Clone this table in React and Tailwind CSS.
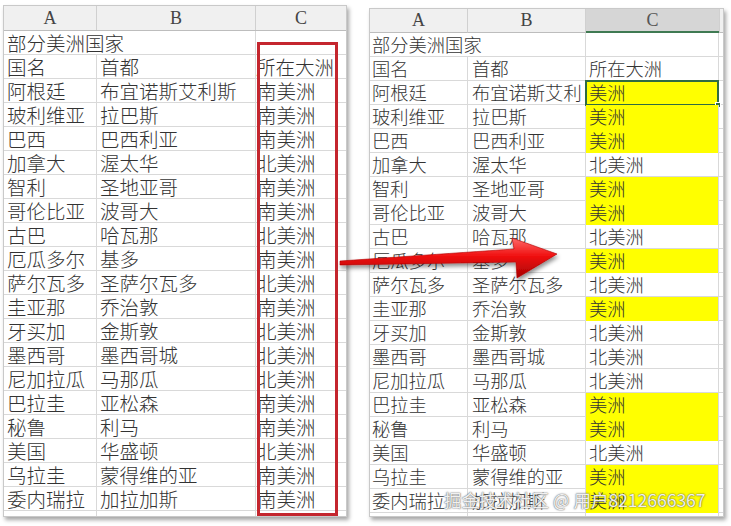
const rows = [
  ["阿根廷", "布宜诺斯艾利斯", "南"],
  ["玻利维亚", "拉巴斯", "南"],
  ["巴西", "巴西利亚", "南"],
  ["加拿大", "渥太华", "北"],
  ["智利", "圣地亚哥", "南"],
  ["哥伦比亚", "波哥大", "南"],
  ["古巴", "哈瓦那", "北"],
  ["厄瓜多尔", "基多", "南"],
  ["萨尔瓦多", "圣萨尔瓦多", "北"],
  ["圭亚那", "乔治敦", "南"],
  ["牙买加", "金斯敦", "北"],
  ["墨西哥", "墨西哥城", "北"],
  ["尼加拉瓜", "马那瓜", "北"],
  ["巴拉圭", "亚松森", "南"],
  ["秘鲁", "利马", "南"],
  ["美国", "华盛顿", "北"],
  ["乌拉圭", "蒙得维的亚", "南"],
  ["委内瑞拉", "加拉加斯", "南"],
];

const cjk = "font-['Noto_Sans_CJK_SC',sans-serif] font-light";

const LeftSheet = () => (
  <div className="mt-[5px] ml-[3px] w-[344px] h-[512px] bg-white border border-[#c9c9c9] shadow-[2px_3px_4px_rgba(0,0,0,0.35)] overflow-hidden">
    <div className="flex h-[25px] bg-[#f0f0f0] border-b border-[#bdbdbd] font-['Liberation_Serif',serif] text-[18px] text-[#444] leading-[25px]">
      <div className="w-[93px] text-center border-r border-[#d0d0d0]">A</div>
      <div className="w-[159px] text-center border-r border-[#d0d0d0]">B</div>
      <div className="flex-1 text-center">C</div>
    </div>
    <div className={`${cjk} text-[19.5px] text-[#333] leading-[23px]`}>
      <div className="flex h-[24px] border-b border-[#d9d9d9]">
        <div className="w-[252px] pl-[3px] border-r border-[#d9d9d9] whitespace-nowrap">部分美洲国家</div>
        <div className="flex-1" />
      </div>
      <div className="flex h-[24px] border-b border-[#d9d9d9]">
        <div className="w-[93px] pl-[3px] border-r border-[#d9d9d9]">国名</div>
        <div className="w-[159px] pl-[3px] border-r border-[#d9d9d9]">首都</div>
        <div className="flex-1 whitespace-nowrap overflow-hidden">所在大洲</div>
      </div>
      {rows.map(([a, b, c]) => (
        <div key={a} className="flex h-[24px] border-b border-[#d9d9d9]">
          <div className="w-[93px] pl-[3px] border-r border-[#d9d9d9] whitespace-nowrap overflow-hidden">{a}</div>
          <div className="w-[159px] pl-[3px] border-r border-[#d9d9d9] whitespace-nowrap overflow-hidden">{b}</div>
          <div className="flex-1 pl-[1px] whitespace-nowrap overflow-hidden">{c}美洲</div>
        </div>
      ))}
      <div className="flex h-[6px]">
        <div className="w-[93px] border-r border-[#d9d9d9]" />
        <div className="w-[159px] border-r border-[#d9d9d9]" />
      </div>
    </div>
  </div>
);

const RightSheet = () => (
  <div className="mt-[8px] ml-[22px] w-[355px] h-[509px] bg-white border border-[#c9c9c9] shadow-[2px_3px_4px_rgba(0,0,0,0.35)] overflow-hidden">
    <div className="flex h-[24px] font-['Liberation_Serif',serif] text-[18px] text-[#444] leading-[23px]">
      <div className="w-[98px] text-center bg-[#f0f0f0] border-r border-b border-[#d0d0d0] border-b-[#bdbdbd]">A</div>
      <div className="w-[118px] text-center bg-[#f0f0f0] border-r border-b border-[#d0d0d0] border-b-[#bdbdbd]">B</div>
      <div className="w-[133px] text-center bg-[#d6d6d6] border-b-2 border-[#3f7a52] text-[#555]">C</div>
      <div className="flex-1 bg-[#f0f0f0] border-l border-b border-[#d0d0d0] border-b-[#bdbdbd]" />
    </div>
    <div className={`${cjk} text-[18.3px] text-[#333] leading-[23px]`}>
      <div className="flex h-[24px] border-b border-[#d9d9d9]">
        <div className="w-[216px] pl-[2px] border-r border-[#d9d9d9] whitespace-nowrap">部分美洲国家</div>
        <div className="w-[133px] border-r border-[#d9d9d9]" />
      </div>
      <div className="flex h-[24px] border-b border-[#d9d9d9]">
        <div className="w-[98px] pl-[2px] border-r border-[#d9d9d9]">国名</div>
        <div className="w-[118px] pl-[4px] border-r border-[#d9d9d9]">首都</div>
        <div className="w-[133px] pl-[3px] border-r border-[#d9d9d9]">所在大洲</div>
      </div>
      {rows.map(([a, b, c], i) => {
        const south = c === "南";
        return (
          <div key={a} className="flex h-[24px] border-b border-[#d9d9d9]">
            <div className="w-[98px] pl-[2px] border-r border-[#d9d9d9] whitespace-nowrap overflow-hidden">{a}</div>
            <div className="w-[118px] pl-[4px] border-r border-[#d9d9d9] whitespace-nowrap overflow-hidden">
              {i === 0 ? "布宜诺斯艾利" : b}
            </div>
            <div
              className={`relative w-[133px] pl-[3px] whitespace-nowrap border-r border-[#d9d9d9] ${
                south ? "bg-[#ffff00] -mb-px h-[24px]" : ""
              }`}
            >
              {south ? "美洲" : "北美洲"}
              {i === 0 && (
                <>
                  <div className="absolute -top-px -left-px -right-px -bottom-px border-2 border-[#2f6b43]" />
                  <div className="absolute -right-[3px] -bottom-[3px] w-[6px] h-[6px] bg-[#2f6b43] border border-white" />
                </>
              )}
            </div>
          </div>
        );
      })}
      <div className="flex h-[5px]">
        <div className="w-[98px] border-r border-[#d9d9d9]" />
        <div className="w-[118px] border-r border-[#d9d9d9]" />
        <div className="w-[133px] border-r border-[#d9d9d9]" />
      </div>
    </div>
  </div>
);

export default function App() {
  return (
    <div className="relative w-[731px] h-[526px] bg-white flex items-start overflow-hidden">
      <LeftSheet />
      <RightSheet />

      <div className="absolute left-[257px] top-[42px] w-[81px] h-[474px] border-[3px] border-[#c4262e]" />

      <svg className="absolute inset-0 pointer-events-none" width="731" height="526" viewBox="0 0 731 526">
        <defs>
          <linearGradient id="arrowFill" x1="0" y1="0" x2="0" y2="1">
            <stop offset="0" stopColor="#ff6a6a" />
            <stop offset="0.45" stopColor="#f01010" />
            <stop offset="1" stopColor="#a80000" />
          </linearGradient>
          <filter id="arrowShadow" x="-10%" y="-30%" width="120%" height="170%">
            <feDropShadow dx="1" dy="3" stdDeviation="2" floodColor="#000" floodOpacity="0.45" />
          </filter>
        </defs>
        <polygon
          points="340,261 514,249 512,238 557,254 517,278 516,262 340,265"
          fill="url(#arrowFill)"
          stroke="#b00000"
          strokeWidth="0.6"
          filter="url(#arrowShadow)"
        />
      </svg>

      <div
        className={`absolute left-[444px] top-[488px] font-['Noto_Sans_CJK_SC',sans-serif] text-[17.5px] leading-[24px] whitespace-nowrap text-[rgba(255,255,255,0.92)] [text-shadow:0_0_1px_rgba(80,80,80,0.9),0_0_2px_rgba(80,80,80,0.7)]`}
      >
        掘金技术社区 @ 用户8212666367
      </div>
    </div>
  );
}
